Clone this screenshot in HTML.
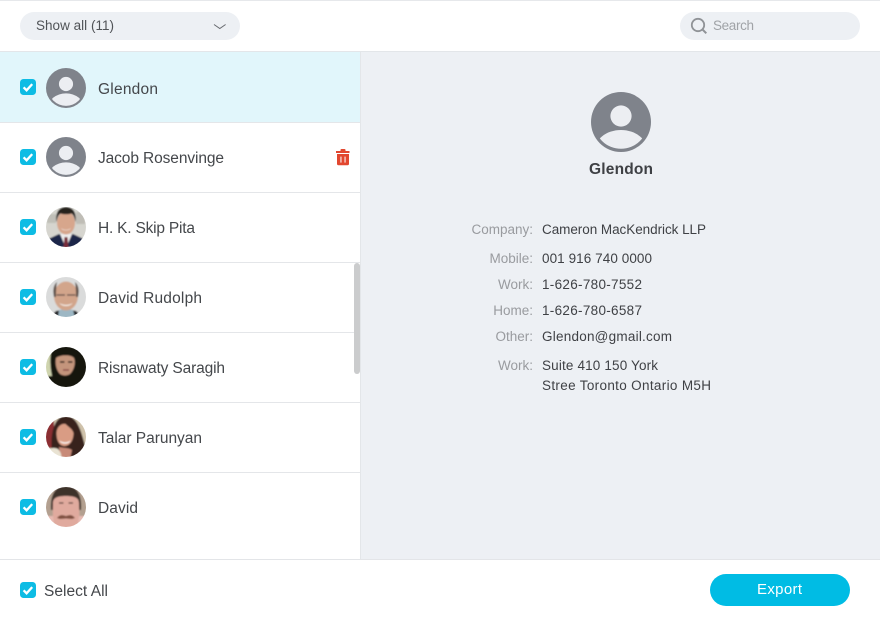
<!DOCTYPE html>
<html lang="en">
<head>
<meta charset="utf-8">
<title>Contacts Export</title>
<style>
html,body{margin:0;padding:0;background:#fff;width:880px;height:620px;overflow:hidden}
svg{display:block}
text{font-family:"Liberation Sans",sans-serif}
.n{font-size:15.5px;fill:#44474b}
.l{font-size:13.5px;fill:#999b9f;text-anchor:end}
.v{font-size:13.5px;fill:#3f4145}
</style>
</head>
<body>
<svg width="880" height="620" viewBox="0 0 880 620" xmlns="http://www.w3.org/2000/svg">
<defs>
<filter id="b" x="-10%" y="-10%" width="120%" height="120%"><feGaussianBlur stdDeviation="0.8"/></filter>
<symbol id="av" viewBox="0 0 60 60">
<circle cx="30" cy="30" r="30" fill="#7f838b"/>
<clipPath id="avc"><circle cx="30" cy="30" r="26.8"/></clipPath>
<circle cx="30" cy="24" r="10.6" fill="#eceef2"/>
<ellipse cx="30" cy="60" rx="27" ry="22" fill="#eceef2" clip-path="url(#avc)"/>
</symbol>
<symbol id="cb" viewBox="0 0 16 16">
<rect width="16" height="16" rx="3.5" fill="#0dbce4"/>
<path d="M3.6 8.3l3 3 5.6-6.200" fill="none" stroke="#fff" stroke-width="2.300"/>
</symbol>
<clipPath id="c1"><circle cx="66" cy="227" r="20"/></clipPath>
<clipPath id="c2"><circle cx="66" cy="297" r="20"/></clipPath>
<clipPath id="c3"><circle cx="66" cy="367" r="20"/></clipPath>
<clipPath id="c4"><circle cx="66" cy="437" r="20"/></clipPath>
<clipPath id="c5"><circle cx="66" cy="507" r="20"/></clipPath>
</defs>

<!-- structure -->
<rect width="880" height="620" fill="#fff"/>
<rect width="880" height="1" fill="#e6e8eb"/>
<rect y="51" width="880" height="1" fill="#e3e6e9"/>
<rect x="361" y="52" width="519" height="507" fill="#edf0f4"/>
<rect x="360" y="52" width="1" height="507" fill="#e3e6e9"/>
<rect y="52" width="360" height="70" fill="#e1f6fb"/>
<rect y="122" width="360" height="1" fill="#e4e6e9"/>
<rect y="192" width="360" height="1" fill="#e4e6e9"/>
<rect y="262" width="360" height="1" fill="#e4e6e9"/>
<rect y="332" width="360" height="1" fill="#e4e6e9"/>
<rect y="402" width="360" height="1" fill="#e4e6e9"/>
<rect y="472" width="360" height="1" fill="#e4e6e9"/>
<rect y="559" width="880" height="1" fill="#e3e5e8"/>
<rect x="354" y="263" width="6" height="111" rx="3" fill="#cbcccd"/>

<!-- header -->
<rect x="20" y="12" width="220" height="28" rx="14" fill="#edf0f4"/>
<text x="36" y="30" font-size="13.5" fill="#505357" textLength="78">Show all (11)</text>
<path d="M214 24.500l5.800 4 5.800-4" fill="none" stroke="#66696e" stroke-width="1"/>
<rect x="680" y="12" width="180" height="28" rx="14" fill="#edf0f4"/>
<circle cx="698" cy="25" r="6.200" fill="none" stroke="#909397" stroke-width="1.800"/>
<path d="M702.500 29.500l3.800 3.800" stroke="#909397" stroke-width="2" fill="none"/>
<text x="713" y="30" font-size="13.5" fill="#a0a3a7" textLength="41">Search</text>

<!-- rows -->
<use href="#cb" x="20" y="79" width="16" height="16"/>
<use href="#av" x="46" y="68" width="40" height="40"/>
<text class="n" x="98" y="94" textLength="60">Glendon</text>

<use href="#cb" x="20" y="149" width="16" height="16"/>
<use href="#av" x="46" y="137" width="40" height="40"/>
<text class="n" x="98" y="163" textLength="126">Jacob Rosenvinge</text>
<path d="M340.500 151v-1a1 1 0 0 1 1-1h3a1 1 0 0 1 1 1v1h4v2h-13.500v-2z" fill="#e2472f"/>
<path d="M337 154h12v9.700a1.500 1.500 0 0 1-1.500 1.500h-9a1.500 1.500 0 0 1-1.500-1.500z" fill="#e2472f"/>
<rect x="340.300" y="156.600" width="1.300" height="6" fill="#fbd9d3"/>
<rect x="344.400" y="156.600" width="1.300" height="6" fill="#fbd9d3"/>

<use href="#cb" x="20" y="219" width="16" height="16"/>
<g clip-path="url(#c1)"><g filter="url(#b)">
<rect x="44" y="205" width="44" height="44" fill="#d6d5cf"/>
<rect x="47" y="214" width="9" height="9" fill="#c0bfb8"/>
<rect x="76" y="212" width="9" height="12" fill="#bfbdb6"/>
<path d="M44 249v-8l15-7 7 3 7-3 15 7v8z" fill="#1c2748"/>
<path d="M60 234l6 14 6-14z" fill="#efeded"/>
<path d="M64.500 237h3l1 11h-5z" fill="#772c38"/>
<ellipse cx="66" cy="223" rx="9" ry="11.500" fill="#d7a68c"/>
<path d="M56.500 222c-1.500-10 3-15 9.500-15s11 5 9.500 15c-1-5-2-7-4-8.500-3 1-8 1-11 0-2 1.500-3 3.500-4 8.500z" fill="#26201f"/>
<path d="M61 228c2 2.500 8 2.500 10 0-1 3-9 3-10 0z" fill="#fff"/>
</g></g>
<text class="n" x="98" y="233" textLength="97">H. K. Skip Pita</text>

<use href="#cb" x="20" y="289" width="16" height="16"/>
<g clip-path="url(#c2)"><g filter="url(#b)">
<rect x="44" y="275" width="44" height="44" fill="#dadbdb"/>
<path d="M48 319l8-8 10-2 10 2 8 8z" fill="#25282b"/>
<path d="M59 310l7-1 7 1 2 8H58z" fill="#9db7c4"/>
<ellipse cx="66" cy="296" rx="12" ry="14.500" fill="#d2a58b"/>
<path d="M54 297c-1.500-7-.5-12 3-15-1 5-1 10-1 15zM78 297c1.500-7 .5-12-3-15 1 5 1 10 1 15z" fill="#5d5049"/>
<path d="M56.500 295h8.500M67 295h8.500" stroke="#5b4a44" stroke-width="1.300"/>
<path d="M59.500 303c3.500 2.500 9.500 2.500 13 0-2 4-11 4-13 0z" fill="#f5f0ea"/>
</g></g>
<text class="n" x="98" y="303" textLength="104">David Rudolph</text>

<use href="#cb" x="20" y="359" width="16" height="16"/>
<g clip-path="url(#c3)"><g filter="url(#b)">
<rect x="44" y="345" width="44" height="44" fill="#171210"/>
<path d="M44 352h7c-1 6-1 14 1 24h-8z" fill="#cfd4ae"/>
<path d="M56 358c3-3 15-4 18 0 2 5 0 12-4 16-3 2-7 2-10 0-4-4-5-11-4-16z" fill="#c4957b"/>
<path d="M60 362h4.500M68 362h4.500" stroke="#2a1c18" stroke-width="1.400"/>
<path d="M63 370h6" stroke="#8a4a48" stroke-width="1.400"/>
</g></g>
<text class="n" x="98" y="373" textLength="127">Risnawaty Saragih</text>

<use href="#cb" x="20" y="429" width="16" height="16"/>
<g clip-path="url(#c4)"><g filter="url(#b)">
<rect x="44" y="415" width="44" height="44" fill="#cfc2ab"/>
<path d="M44 420h10v28H44z" fill="#8b2d33"/>
<path d="M52 452c-2-18 2-36 14-36 13 0 16 20 20 33l-8 10H60z" fill="#38231f"/>
<path d="M56.500 433c0-6 5-10 9-9 3 3 7 5 8 9 0 8-4 13-9 13s-8-5-8-13z" fill="#d99c84"/>
<path d="M59.500 440.500c3 2.500 8 2.500 11 0-1 4-10 4-11 0z" fill="#fff"/>
<path d="M59 447c4 1 11 1 13 3l-2 9H60z" fill="#c88a78"/>
<path d="M46 451c3-3 9-4 12-2 3 3 4 7 3 10H46z" fill="#e9e3d3"/>
</g></g>
<text class="n" x="98" y="443" textLength="104">Talar Parunyan</text>

<use href="#cb" x="20" y="499" width="16" height="16"/>
<g clip-path="url(#c5)"><g filter="url(#b)">
<rect x="44" y="485" width="44" height="44" fill="#b3a090"/>
<path d="M51 510c-1-15 4-24 15-24s16 9 15 24z" fill="#3d3029"/>
<path d="M53 503c0-5 4-7 13-7s13 2 13 7c0 11 4 27-13 27-16 0-13-16-13-27z" fill="#e0aa9e"/>
<path d="M59 503h4.500M68.500 503h4.500" stroke="#5a4038" stroke-width="1.300"/>
<path d="M57 518c3-4 6-3 9-2 3-1 6-2 9 2l-3 1c-2 0-4-.5-6-.5s-4 .5-6 .5z" fill="#7f5040"/>
<path d="M44 516h9l2 14H44zM88 516h-9l-2 14h11z" fill="#e6bab2"/>
</g></g>
<text class="n" x="98" y="513" textLength="40">David</text>

<!-- details -->
<use href="#av" x="591" y="92" width="60" height="60"/>
<text x="589" y="174" font-size="15.5" font-weight="700" fill="#3e4044" textLength="64">Glendon</text>

<text class="l" x="533" y="234">Company:</text>
<text class="v" x="542" y="234" textLength="164">Cameron MacKendrick LLP</text>
<text class="l" x="533" y="263">Mobile:</text>
<text class="v" x="542" y="263" textLength="110">001 916 740 0000</text>
<text class="l" x="533" y="289">Work:</text>
<text class="v" x="542" y="289" textLength="100">1-626-780-7552</text>
<text class="l" x="533" y="315">Home:</text>
<text class="v" x="542" y="315" textLength="100">1-626-780-6587</text>
<text class="l" x="533" y="341">Other:</text>
<text class="v" x="542" y="341" textLength="130">Glendon@gmail.com</text>
<text class="l" x="533" y="370">Work:</text>
<text class="v" x="542" y="370" textLength="116">Suite 410 150 York</text>
<text class="v" x="542" y="390" textLength="169">Stree Toronto Ontario M5H</text>

<!-- footer -->
<use href="#cb" x="20" y="582" width="16" height="16"/>
<text class="n" x="44" y="596" textLength="64">Select All</text>
<rect x="710" y="574" width="140" height="32" rx="16" fill="#00bce4"/>
<text x="757" y="594" font-size="15" fill="#fff" textLength="45">Export</text>
</svg>
</body>
</html>
